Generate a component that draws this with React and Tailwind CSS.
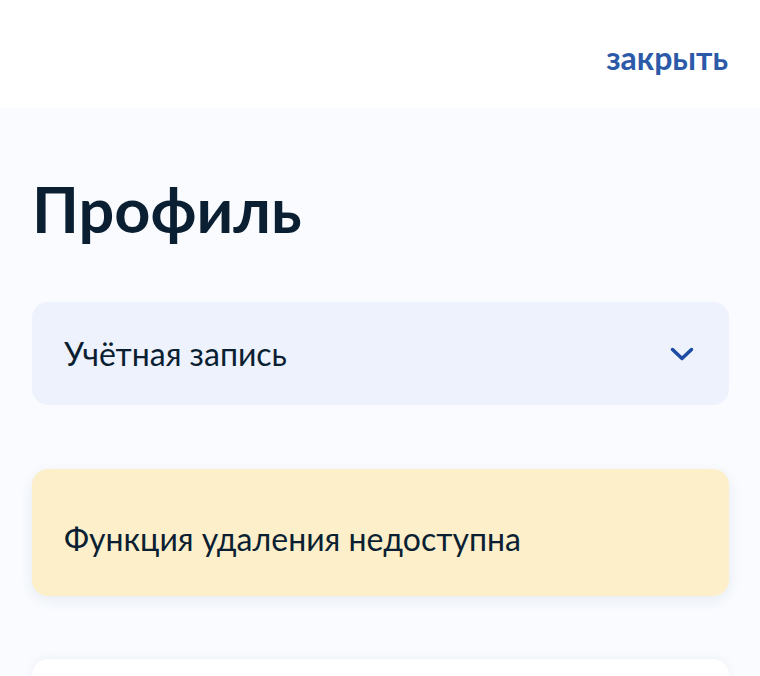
export default function App() {
  return (
    <div className="min-h-[676px] bg-[#f9fbfe] font-['Lato',sans-serif] text-[#0b1f33]">
      {/* Header */}
      <div className="h-[108px] bg-white flex justify-end items-start pt-[38px] pr-8">
        <button className="text-[32px] font-bold leading-[40px] text-[#2c5aa8]">закрыть</button>
      </div>

      <div className="pl-8 pr-[31px] pt-[64px]">
        <h1 className="text-[63px] font-bold leading-[74px]">Профиль</h1>

        {/* Account accordion */}
        <div className="mt-[56px] h-[103px] rounded-2xl bg-[#eef2fd] flex items-center justify-between pl-8 pr-[35px]">
          <span className="text-[32px] leading-none">Учётная запись</span>
          <svg width="24" height="14" viewBox="0 0 24 14" fill="none" className="text-[#1d4ba3]">
            <path d="M2.5 2.5 12 11.5 21.5 2.5" stroke="currentColor" strokeWidth="3.5" strokeLinecap="round" strokeLinejoin="round" />
          </svg>
        </div>

        {/* Warning */}
        <div className="mt-[64px] h-[127px] rounded-2xl bg-[#fdefca] shadow-[0_4px_14px_rgba(30,60,120,0.08)] flex items-center pl-8 pt-3">
          <span className="text-[32px] leading-none">Функция удаления недоступна</span>
        </div>

        {/* Next card */}
        <div className="mt-[63px] h-[40px] rounded-t-2xl bg-white shadow-[0_-2px_10px_rgba(30,60,120,0.05)]" />
      </div>
    </div>
  );
}
